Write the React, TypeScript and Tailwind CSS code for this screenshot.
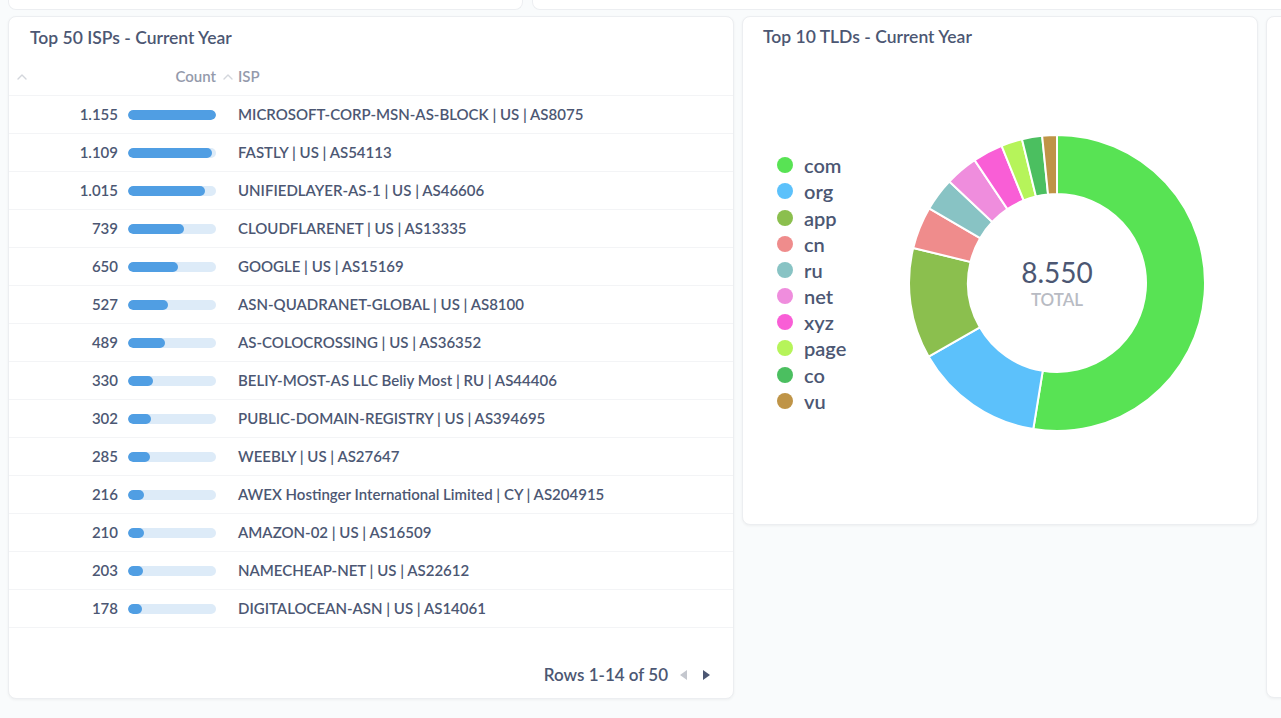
import React from 'react'

const isps = [
  { count: 1155, name: 'MICROSOFT-CORP-MSN-AS-BLOCK | US | AS8075' },
  { count: 1109, name: 'FASTLY | US | AS54113' },
  { count: 1015, name: 'UNIFIEDLAYER-AS-1 | US | AS46606' },
  { count: 739, name: 'CLOUDFLARENET | US | AS13335' },
  { count: 650, name: 'GOOGLE | US | AS15169' },
  { count: 527, name: 'ASN-QUADRANET-GLOBAL | US | AS8100' },
  { count: 489, name: 'AS-COLOCROSSING | US | AS36352' },
  { count: 330, name: 'BELIY-MOST-AS LLC Beliy Most | RU | AS44406' },
  { count: 302, name: 'PUBLIC-DOMAIN-REGISTRY | US | AS394695' },
  { count: 285, name: 'WEEBLY | US | AS27647' },
  { count: 216, name: 'AWEX Hostinger International Limited | CY | AS204915' },
  { count: 210, name: 'AMAZON-02 | US | AS16509' },
  { count: 203, name: 'NAMECHEAP-NET | US | AS22612' },
  { count: 178, name: 'DIGITALOCEAN-ASN | US | AS14061' },
]

const tlds = [
  { name: 'com', value: 4494, color: '#58e354' },
  { name: 'org', value: 1209, color: '#5cc1fb' },
  { name: 'app', value: 1035, color: '#8bbf4e' },
  { name: 'cn', value: 393, color: '#ef8c8c' },
  { name: 'ru', value: 310, color: '#88c3c4' },
  { name: 'net', value: 305, color: '#ef8ddd' },
  { name: 'xyz', value: 282, color: '#f95ed6' },
  { name: 'page', value: 197, color: '#b6f45a' },
  { name: 'co', value: 188, color: '#4bbf60' },
  { name: 'vu', value: 137, color: '#bf9447' },
]

const fmt = (n: number) => String(n).replace(/\B(?=(\d{3})+(?!\d))/g, '.')

function Chevron() {
  return (
    <svg width="10" height="6" viewBox="0 0 10 6" fill="none">
      <path d="M1 5l4-4 4 4" stroke="#d3d6dc" strokeWidth={1.4} strokeLinecap="round" strokeLinejoin="round" />
    </svg>
  )
}

function slicePath(a0: number, a1: number) {
  const R = 148
  const r = 89
  const p = (rad: number, a: number) => [150 + rad * Math.sin(a), 150 - rad * Math.cos(a)]
  const large = a1 - a0 > Math.PI ? 1 : 0
  const [x0, y0] = p(R, a0)
  const [x1, y1] = p(R, a1)
  const [x2, y2] = p(r, a1)
  const [x3, y3] = p(r, a0)
  return `M${x0} ${y0}A${R} ${R} 0 ${large} 1 ${x1} ${y1}L${x2} ${y2}A${r} ${r} 0 ${large} 0 ${x3} ${y3}Z`
}

function Donut() {
  const total = tlds.reduce((s, t) => s + t.value, 0)
  let acc = 0
  return (
    <svg width="300" height="300" viewBox="0 0 300 300">
      {tlds.map((t) => {
        const a0 = (acc / total) * Math.PI * 2
        acc += t.value
        const a1 = (acc / total) * Math.PI * 2
        return <path key={t.name} d={slicePath(a0, a1)} fill={t.color} stroke="#fff" strokeWidth={2} />
      })}
      <text x="150" y="150" textAnchor="middle" fontSize="28" fill="#4c5773" fontFamily="Lato, sans-serif">
        {fmt(total)}
      </text>
      <text x="150" y="173" textAnchor="middle" fontSize="17" fontWeight="600" fill="#b8bbc3" fontFamily="Lato, sans-serif">
        TOTAL
      </text>
    </svg>
  )
}

export default function App() {
  const max = isps[0].count

  return (
    <div className="w-full h-[718px] overflow-hidden bg-[#f9fbfc] font-['Lato',sans-serif] text-[#4c5773]">
      {/* top row, cut off by the viewport */}
      <div className="flex h-[10px] pl-[8px]">
        <div className="w-[515px] shrink-0 h-full bg-white rounded-b-lg border border-t-0 border-[#eceef1]" />
        <div className="ml-[9px] w-[800px] shrink-0 h-full bg-white rounded-b-lg border border-t-0 border-[#eceef1]" />
      </div>

      <div className="flex items-start gap-[8px] pl-[8px] mt-[6px]">
        {/* ISP table */}
        <div className="w-[726px] h-[683px] shrink-0 flex flex-col bg-white rounded-lg border border-[#eceef1] shadow-[0_1px_3px_rgba(0,0,0,0.05)]">
          <div className="h-[41px] pt-[9px] pl-[21px] text-[17.5px] leading-6 font-semibold">Top 50 ISPs - Current Year</div>
          <div className="h-[38px] flex items-center border-b border-[#f3f4f6] text-[15px] font-semibold text-[#949aab]">
            <div className="w-[217px] flex items-center pl-[8px] pr-[10px]">
              <Chevron />
              <span className="ml-auto">Count</span>
            </div>
            <div className="flex items-center gap-[5px] -ml-[3px]">
              <Chevron />
              <span>ISP</span>
            </div>
          </div>
          {isps.map((row) => (
            <div key={row.name} className="h-[38px] flex items-center border-b border-[#f3f4f6] text-[15px] font-semibold">
              <div className="w-[217px] flex items-center justify-end gap-[10px] pr-[10px]">
                <span>{fmt(row.count)}</span>
                <div className="w-[88px] h-[10px] rounded-full bg-[#ddebf8] overflow-hidden">
                  <div className="h-full rounded-full bg-[#509ee3]" style={{ width: `${(row.count / max) * 88}px` }} />
                </div>
              </div>
              <div className="pl-[12px]">{row.name}</div>
            </div>
          ))}
          <div className="flex-1 flex items-end justify-end pr-[23px] pb-[11px]">
            <span className="text-[17px] leading-6 font-semibold">Rows 1-14 of 50</span>
            <div className="flex items-center h-6 ml-[12px] gap-[16px]">
              <svg width="7" height="10" viewBox="0 0 7 10">
                <path d="M7 0v10L0 5z" fill="#c4c7ce" />
              </svg>
              <svg width="7" height="10" viewBox="0 0 7 10">
                <path d="M0 0v10l7-5z" fill="#4c5773" />
              </svg>
            </div>
          </div>
        </div>

        {/* TLD donut */}
        <div className="w-[516px] h-[509px] shrink-0 bg-white rounded-lg border border-[#eceef1] shadow-[0_1px_3px_rgba(0,0,0,0.05)]">
          <div className="pt-[8px] pl-[20px] text-[17.5px] leading-6 font-semibold">Top 10 TLDs - Current Year</div>
          <div className="flex mt-[84px]">
            <div className="w-[130px] ml-[34px] h-[300px] flex flex-col justify-center">
              {tlds.map((t) => (
                <div key={t.name} className="h-[26.2px] flex items-center gap-[11px]">
                  <span className="w-[16px] h-[16px] rounded-full" style={{ backgroundColor: t.color }} />
                  <span className="text-[20px] font-semibold leading-none">{t.name}</span>
                </div>
              ))}
            </div>
            <Donut />
          </div>
        </div>

        {/* next card, mostly off screen */}
        <div className="w-[300px] h-[682px] shrink-0 bg-white rounded-lg border border-[#eceef1] shadow-[0_1px_3px_rgba(0,0,0,0.05)]" />
      </div>
    </div>
  )
}
